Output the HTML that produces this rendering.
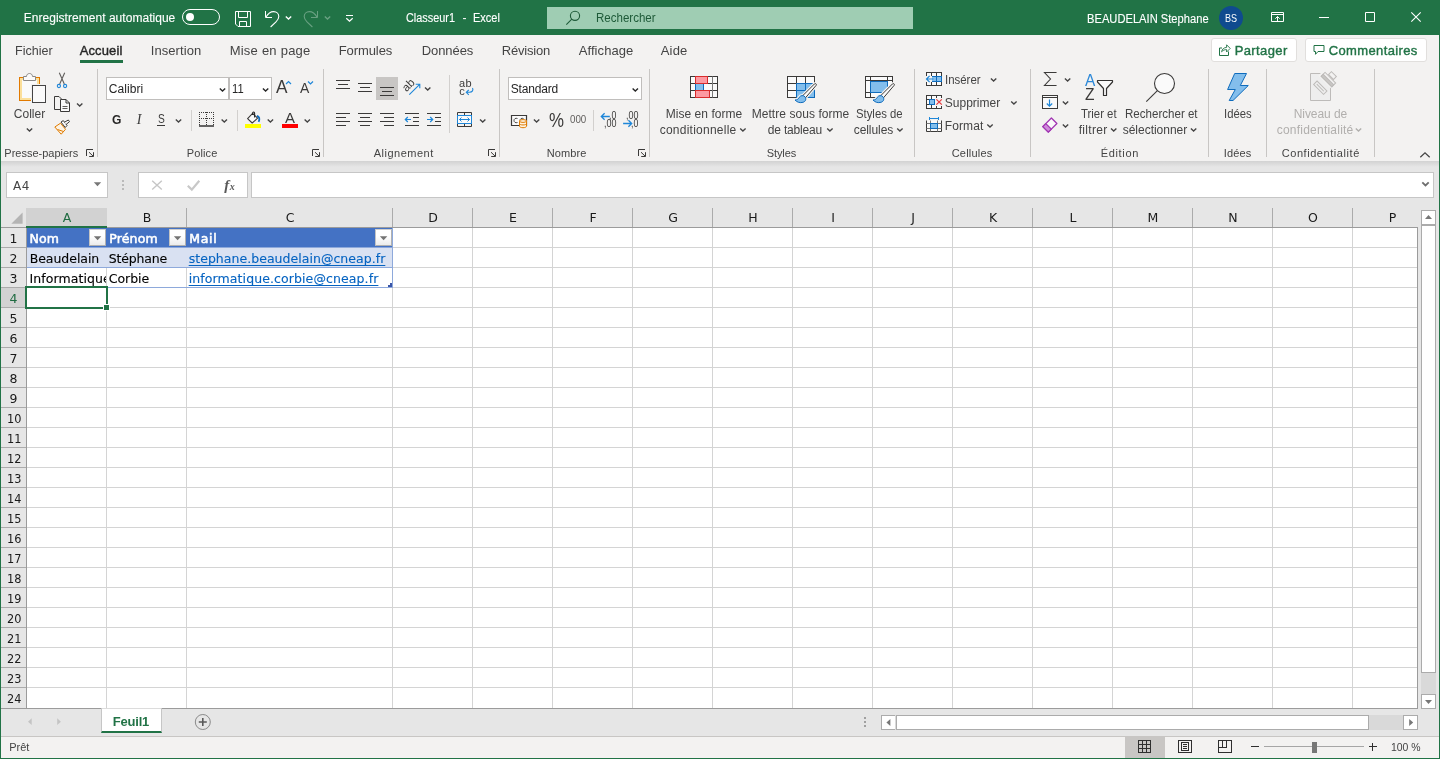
<!DOCTYPE html>
<html lang="fr">
<head>
<meta charset="utf-8">
<title>Classeur1 - Excel</title>
<style>
*{box-sizing:border-box;margin:0;padding:0}
html,body{width:1440px;height:759px;overflow:hidden;background:#e6e6e6;font-family:"Liberation Sans",sans-serif;font-size:12px}
#app{position:relative;width:1440px;height:759px;overflow:hidden;background:#e6e6e6}
#app div,#app span,#app svg{position:absolute}
.t{white-space:nowrap;line-height:1.2}
#tl{left:0;top:0;width:1440px;height:759px;will-change:transform}
.titlebar{left:0;top:0;width:1440px;height:35px;background:#217346}
.search{left:547px;top:7px;width:366px;height:22px;background:#9fcdb3}
.toggle{left:182px;top:9px;width:38px;height:16px;border:1px solid #fff;border-radius:8px}
.toggle i{position:absolute;left:3px;top:3px;width:8px;height:8px;border-radius:50%;background:#fff}
.avatar{left:1219px;top:6px;width:24px;height:24px;border-radius:50%;background:#0f4b8f}
.tabs{left:1px;top:35px;width:1438px;height:30px;background:#f3f2f1}
.ribbon{left:1px;top:65px;width:1438px;height:96px;background:#f3f2f1}
.shadow{left:1px;top:161px;width:1438px;height:6px;background:linear-gradient(#d2d2d2,#e6e6e6)}
.tabline{left:80px;top:60px;width:43px;height:3px;background:#217346}
.btn{background:#fff;border:1px solid #e1dfdd;border-radius:3px;height:24px;top:38px}
.sep{width:1px;background:#c8c6c4;top:69px;height:88px}
.sep2{width:1px;background:#d2d0ce}
.combo{background:#fff;border:1px solid #c0bebc;height:23px;top:77px}
.fbox{background:#fff;border:1px solid #c6c6c6;top:172px;height:26px}
.hdr{background:#e6e6e6}
.grid{left:27px;top:228px;width:1391px;height:480px;background:#fff}
.vl{width:1px;top:228px;height:480px;background:#d4d4d4}
.hl{height:1px;left:27px;width:1391px;background:#d4d4d4}
.chl{width:1px;top:208px;height:19px;background:#ababab}
.rhl{height:1px;left:0;width:26px;background:#ababab}
.flt{width:17px;height:17px;background:linear-gradient(#fff 40%,#ececec);border:1px solid #b1b1b1;border-top-color:#d0d0d0;border-left-color:#c4c4c4}
.sb{background:#fff;border:1px solid #ababab}
.status{left:1px;top:737px;width:1438px;height:21px;background:#f3f2f1}
.frame{left:0;top:0;width:1440px;height:759px;border:1px solid #217346;border-top:0;pointer-events:none}
</style>
</head>
<body>
<div id="app">

<!-- ============ TITLE BAR ============ -->
<div class="titlebar">
  <div class="toggle"><i></i></div>
  <div class="search"></div>
  <div class="avatar"></div>
</div>

<!-- ============ TABS ============ -->
<div class="tabs"></div>
<div class="tabline"></div>
<div class="btn" style="left:1211px;width:86px"></div>
<div class="btn" style="left:1305px;width:122px"></div>

<!-- ============ RIBBON ============ -->
<div class="ribbon"></div>
<div class="shadow"></div>
<div class="sep" style="left:97px"></div>
<div class="sep" style="left:323px"></div>
<div class="sep" style="left:499px"></div>
<div class="sep" style="left:649px"></div>
<div class="sep" style="left:914px"></div>
<div class="sep" style="left:1030px"></div>
<div class="sep" style="left:1208px"></div>
<div class="sep" style="left:1266px"></div>
<div class="sep" style="left:1374px"></div>
<div class="sep2" style="left:191px;top:110px;height:21px"></div>
<div class="sep2" style="left:237px;top:110px;height:21px"></div>
<div class="sep2" style="left:449px;top:75px;height:58px"></div>
<div class="sep2" style="left:593px;top:110px;height:21px"></div>
<div class="combo" style="left:106px;width:123px"></div>
<div class="combo" style="left:229px;width:43px"></div>
<div class="combo" style="left:508px;width:134px"></div>
<div style="left:376px;top:77px;width:22px;height:23px;background:#c8c6c4"></div>

<!-- ============ FORMULA BAR ============ -->
<div class="fbox" style="left:6px;width:102px"></div>
<div class="fbox" style="left:138px;width:110px"></div>
<div class="fbox" style="left:251px;width:1183px"></div>

<!-- ============ SHEET ============ -->
<div class="hdr" style="left:1px;top:208px;width:1417px;height:20px"></div>
<div style="left:1px;top:288px;width:25px;height:19px;background:#d2d2d2"></div>
<div class="grid"></div>
<div class="vl" style="left:106px"></div>
<div class="chl" style="left:106px"></div>
<div class="vl" style="left:186px"></div>
<div class="chl" style="left:186px"></div>
<div class="vl" style="left:392px"></div>
<div class="chl" style="left:392px"></div>
<div class="vl" style="left:472px"></div>
<div class="chl" style="left:472px"></div>
<div class="vl" style="left:552px"></div>
<div class="chl" style="left:552px"></div>
<div class="vl" style="left:632px"></div>
<div class="chl" style="left:632px"></div>
<div class="vl" style="left:712px"></div>
<div class="chl" style="left:712px"></div>
<div class="vl" style="left:792px"></div>
<div class="chl" style="left:792px"></div>
<div class="vl" style="left:872px"></div>
<div class="chl" style="left:872px"></div>
<div class="vl" style="left:952px"></div>
<div class="chl" style="left:952px"></div>
<div class="vl" style="left:1032px"></div>
<div class="chl" style="left:1032px"></div>
<div class="vl" style="left:1112px"></div>
<div class="chl" style="left:1112px"></div>
<div class="vl" style="left:1192px"></div>
<div class="chl" style="left:1192px"></div>
<div class="vl" style="left:1272px"></div>
<div class="chl" style="left:1272px"></div>
<div class="vl" style="left:1352px"></div>
<div class="chl" style="left:1352px"></div>
<div class="hl" style="top:247px"></div>
<div class="rhl" style="top:247px"></div>
<div class="hl" style="top:267px"></div>
<div class="rhl" style="top:267px"></div>
<div class="hl" style="top:287px"></div>
<div class="rhl" style="top:287px"></div>
<div class="hl" style="top:307px"></div>
<div class="rhl" style="top:307px"></div>
<div class="hl" style="top:327px"></div>
<div class="rhl" style="top:327px"></div>
<div class="hl" style="top:347px"></div>
<div class="rhl" style="top:347px"></div>
<div class="hl" style="top:367px"></div>
<div class="rhl" style="top:367px"></div>
<div class="hl" style="top:387px"></div>
<div class="rhl" style="top:387px"></div>
<div class="hl" style="top:407px"></div>
<div class="rhl" style="top:407px"></div>
<div class="hl" style="top:427px"></div>
<div class="rhl" style="top:427px"></div>
<div class="hl" style="top:447px"></div>
<div class="rhl" style="top:447px"></div>
<div class="hl" style="top:467px"></div>
<div class="rhl" style="top:467px"></div>
<div class="hl" style="top:487px"></div>
<div class="rhl" style="top:487px"></div>
<div class="hl" style="top:507px"></div>
<div class="rhl" style="top:507px"></div>
<div class="hl" style="top:527px"></div>
<div class="rhl" style="top:527px"></div>
<div class="hl" style="top:547px"></div>
<div class="rhl" style="top:547px"></div>
<div class="hl" style="top:567px"></div>
<div class="rhl" style="top:567px"></div>
<div class="hl" style="top:587px"></div>
<div class="rhl" style="top:587px"></div>
<div class="hl" style="top:607px"></div>
<div class="rhl" style="top:607px"></div>
<div class="hl" style="top:627px"></div>
<div class="rhl" style="top:627px"></div>
<div class="hl" style="top:647px"></div>
<div class="rhl" style="top:647px"></div>
<div class="hl" style="top:667px"></div>
<div class="rhl" style="top:667px"></div>
<div class="hl" style="top:687px"></div>
<div class="rhl" style="top:687px"></div>
<!-- grid frame -->
<div style="left:0;top:227px;width:1418px;height:1px;background:#9b9b9b"></div>
<div style="left:26px;top:209px;width:1px;height:499px;background:#9b9b9b"></div>
<div style="left:1417px;top:227px;width:1px;height:482px;background:#9b9b9b"></div>
<div style="left:0;top:708px;width:1418px;height:1px;background:#9b9b9b"></div>
<div style="left:26px;top:208px;width:81px;height:20px;background:#d2d2d2;border-bottom:2px solid #217346"></div>
<!-- table -->
<div style="left:27px;top:228px;width:366px;height:20px;background:#4472c4;border-right:1px solid #8ea9db;border-bottom:1px solid #8ea9db"></div>
<div style="left:27px;top:248px;width:366px;height:20px;background:#d9e1f2;border-right:1px solid #8ea9db;border-bottom:1px solid #8ea9db"></div>
<div style="left:27px;top:268px;width:366px;height:20px;border-right:1px solid #8ea9db;border-bottom:1px solid #8ea9db"></div>
<div class="flt" style="left:89px;top:229px"></div>
<div class="flt" style="left:169px;top:229px"></div>
<div class="flt" style="left:375px;top:229px"></div>
<!-- selection -->
<div style="left:25px;top:286px;width:83px;height:23px;border:2px solid #217346"></div>
<div style="left:103px;top:304px;width:7px;height:7px;background:#217346;border:1px solid #fff"></div>
<!-- vertical scrollbar -->
<div class="sb" style="left:1421px;top:210px;width:15px;height:15px"></div>
<div style="left:1421px;top:225px;width:15px;height:469px;background:#d9d9d9"></div>
<div class="sb" style="left:1421px;top:225px;width:15px;height:448px"></div>
<div class="sb" style="left:1421px;top:694px;width:15px;height:15px"></div>
<!-- horizontal scrollbar -->
<div class="sb" style="left:881px;top:715px;width:15px;height:15px"></div>
<div style="left:895px;top:715px;width:509px;height:15px;background:#d9d9d9"></div>
<div class="sb" style="left:896px;top:715px;width:473px;height:15px"></div>
<div class="sb" style="left:1403px;top:715px;width:15px;height:15px"></div>

<!-- sheet tab -->
<div style="left:101px;top:708px;width:61px;height:25px;background:#fff;border-left:1px solid #c6c6c6;border-right:1px solid #c6c6c6;border-bottom:2px solid #217346"></div>
<div style="left:102px;top:708px;width:59px;height:1px;background:#dcdcdc"></div>
<div style="left:1px;top:736px;width:1438px;height:1px;background:#c8c6c4"></div>

<!-- ============ STATUS BAR ============ -->
<div class="status"></div>
<div style="left:1125px;top:737px;width:40px;height:21px;background:#c8c6c4"></div>

<svg class="icons" style="left:0;top:0" width="1440" height="759" viewBox="0 0 1440 759" fill="none" stroke-linecap="butt">
<!-- title bar: quick access -->
<g stroke="#fff" stroke-width="1">
  <path d="M235.5,11.5 H250.5 V26.5 H238 L235.5,24 Z"/>
  <path d="M238.5,11.5 V17.5 H247.5 V11.5"/>
  <path d="M239.5,26.5 V21.5 H246.5 V26.5"/>
  <path d="M265.5,11 V17.5 H272"/>
  <path d="M266,17 C268,13.5 270.8,11.6 273.6,11.6 C276.8,11.6 278.8,13.8 278.8,16.6 C278.8,18.8 277.6,20.4 276,21.8 L270.6,27" stroke-width="1.1"/>
  <path d="M0.3,0.4 L3,3 L5.7,0.4" stroke-width="1.35" fill="none" transform="translate(285.5,16)"/>
  <g opacity="0.32">
    <path d="M317.5,11 V17.5 H311"/>
    <path d="M317,17 C315,13.5 312.2,11.6 309.4,11.6 C306.2,11.6 304.2,13.8 304.2,16.6 C304.2,18.8 305.4,20.4 307,21.8 L312.4,27" stroke-width="1.1"/>
    <path d="M0.3,0.4 L3,3 L5.7,0.4" stroke-width="1.35" fill="none" transform="translate(324.5,16)"/>
  </g>
  <path d="M346,15.5 H353"/>
  <path d="M346.3,18.3 L349.5,21.3 L352.7,18.3" stroke-width="1.2"/>
</g>
<!-- search icon -->
<g stroke="#1e5a38" stroke-width="1.1">
  <circle cx="575" cy="15.8" r="4.6"/>
  <path d="M571.8,19.2 L566.3,24.7"/>
</g>
<!-- window buttons -->
<g stroke="#fff" stroke-width="1">
  <path d="M1271.5,12.5 H1283.5 V21.5 H1271.5 Z M1271.5,14.5 H1283.5"/>
  <path d="M1277.5,21 V16.5 M1275.3,18.7 L1277.5,16.5 L1279.7,18.7"/>
  <path d="M1319,17.5 H1329"/>
  <path d="M1365.5,12.5 H1374.5 V21.5 H1365.5 Z"/>
  <path d="M1411.3,12.3 L1420.7,21.7 M1420.7,12.3 L1411.3,21.7" stroke-width="1.1"/>
</g>
<!-- share / comments -->
<g stroke="#217346" stroke-width="1">
  <path d="M1222,48 H1219.5 V55.5 H1228.5 V51.5"/>
  <path d="M1221.6,51.8 C1222,49.2 1223.8,47.6 1226.6,47.4 V44.8 L1230.2,48.4 L1226.6,52 V49.6 C1224.6,49.6 1223,50.2 1221.6,51.8 Z" stroke-linejoin="round" stroke-width="0.9"/>
  <path d="M1314,45.5 H1324 V51.5 H1318 L1315.5,54.3 V51.5 H1314 Z"/>
</g>
<!-- collapse ribbon chevron -->
<path d="M1420.3,157.3 L1425,152.8 L1429.7,157.3" stroke="#444" stroke-width="1.2"/>

<!-- ===== Presse-papiers ===== -->
<g>
  <rect x="19.5" y="77.5" width="20" height="23" fill="#fbdf9a" stroke="#e27a00"/>
  <rect x="22" y="80" width="15" height="18" fill="#fafafa"/>
  <path d="M23.5,80.5 V76.5 H26.5 C26.5,74.5 28,73.5 29.5,73.5 C31,73.5 32.5,74.5 32.5,76.5 H35.5 V80.5 Z" fill="#fafafa" stroke="#8a8886"/>
  <rect x="31" y="84" width="16" height="20" fill="#f3f2f1"/>
  <rect x="32.5" y="85.5" width="13" height="17" fill="#fafafa" stroke="#444"/>
  <path d="M0.3,0.4 L3,3 L5.7,0.4" stroke-width="1.35" fill="none" transform="translate(26.5,128)" stroke="#444"/>
  <!-- scissors -->
  <path d="M59.3,72.8 L64.3,84 M64.7,72.8 L59.7,84" stroke="#605e5c" stroke-width="1.1"/>
  <circle cx="58.9" cy="86" r="1.6" stroke="#1e86d8" stroke-width="1.1"/>
  <circle cx="65.1" cy="86" r="1.6" stroke="#1e86d8" stroke-width="1.1"/>
  <!-- copy -->
  <path d="M60.5,109.5 H54.5 V96.5 H59 L61.5,99" stroke="#3b3a39"/>
  <path d="M60.5,99.5 H66 L69.5,103 V111.5 H60.5 Z" stroke="#3b3a39" fill="#fafafa"/>
  <path d="M66,99.5 V103 H69.5" stroke="#3b3a39"/>
  <path d="M62.5,106.5 H67.5 M62.5,108.5 H67.5" stroke="#605e5c"/>
  <path d="M0.3,0.4 L3,3 L5.7,0.4" stroke-width="1.35" fill="none" transform="translate(76.7,103)" stroke="#444"/>
  <!-- format painter -->
  <path d="M54.8,127 L60.5,123.2 L65.5,129.3 L61.2,134.2 Z" fill="#fdf3e3" stroke="#e07b00" stroke-linejoin="round"/>
  <path d="M57.5,129.5 L63.5,131.5" stroke="#e07b00"/>
  <path d="M61,122 L63.3,120.6 L67,125.5 L65.2,127.5 Z" fill="#fafafa" stroke="#3b3a39" stroke-linejoin="round"/>
  <path d="M64.3,122.3 L68.3,120 L69.5,121.6 L66,124.6" stroke="#3b3a39" fill="#fafafa"/>
  <path d="M0.5,7 V0.5 H7 M3,3.2 L7.2,7.2 M7.5,3.2 V7.5 H3.2" stroke="#3b3a39" stroke-width="1" fill="none" transform="translate(86,149)"/>
</g>


<!-- ===== Police ===== -->
<g stroke="#262626">
  <path d="M0.3,0.4 L3,3 L5.7,0.4" stroke-width="1.35" fill="none" transform="translate(219.5,88)"/>
  <path d="M0.3,0.4 L3,3 L5.7,0.4" stroke-width="1.35" fill="none" transform="translate(262.6,88)"/>
  <path d="M0.3,0.4 L3,3 L5.7,0.4" stroke-width="1.35" fill="none" transform="translate(632.3,88)"/>
</g>
<g stroke="#444">
  <path d="M0.3,0.4 L3,3 L5.7,0.4" stroke-width="1.35" fill="none" transform="translate(175.5,119)"/>
  <path d="M0.3,0.4 L3,3 L5.7,0.4" stroke-width="1.35" fill="none" transform="translate(221.3,119)"/>
  <path d="M0.3,0.4 L3,3 L5.7,0.4" stroke-width="1.35" fill="none" transform="translate(267.4,119)"/>
  <path d="M0.3,0.4 L3,3 L5.7,0.4" stroke-width="1.35" fill="none" transform="translate(304.3,119)"/>
  <path d="M0.3,0.4 L3,3 L5.7,0.4" stroke-width="1.35" fill="none" transform="translate(424.7,87)"/>
  <path d="M0.3,0.4 L3,3 L5.7,0.4" stroke-width="1.35" fill="none" transform="translate(479.7,119)"/>
  <path d="M0.3,0.4 L3,3 L5.7,0.4" stroke-width="1.35" fill="none" transform="translate(533.6,119)"/>
  <path d="M0.3,0.4 L3,3 L5.7,0.4" stroke-width="1.35" fill="none" transform="translate(739.9,128)"/>
  <path d="M0.3,0.4 L3,3 L5.7,0.4" stroke-width="1.35" fill="none" transform="translate(826.9,128)"/>
  <path d="M0.3,0.4 L3,3 L5.7,0.4" stroke-width="1.35" fill="none" transform="translate(896.9,128)"/>
  <path d="M0.3,0.4 L3,3 L5.7,0.4" stroke-width="1.35" fill="none" transform="translate(990.6,78)"/>
  <path d="M0.3,0.4 L3,3 L5.7,0.4" stroke-width="1.35" fill="none" transform="translate(1010.9,101)"/>
  <path d="M0.3,0.4 L3,3 L5.7,0.4" stroke-width="1.35" fill="none" transform="translate(987,124)"/>
  <path d="M0.3,0.4 L3,3 L5.7,0.4" stroke-width="1.35" fill="none" transform="translate(1064.6,78)"/>
  <path d="M0.3,0.4 L3,3 L5.7,0.4" stroke-width="1.35" fill="none" transform="translate(1062.5,101)"/>
  <path d="M0.3,0.4 L3,3 L5.7,0.4" stroke-width="1.35" fill="none" transform="translate(1062.5,124)"/>
  <path d="M0.3,0.4 L3,3 L5.7,0.4" stroke-width="1.35" fill="none" transform="translate(1110.7,128)"/>
  <path d="M0.3,0.4 L3,3 L5.7,0.4" stroke-width="1.35" fill="none" transform="translate(1190.6,128)"/>
</g>
<path d="M0.3,0.4 L3,3 L5.7,0.4" stroke-width="1.35" fill="none" transform="translate(1355.5,128)" stroke="#b1afad"/>
<path d="M0.5,7 V0.5 H7 M3,3.2 L7.2,7.2 M7.5,3.2 V7.5 H3.2" stroke="#3b3a39" stroke-width="1" fill="none" transform="translate(312,149)"/>
<path d="M0.5,7 V0.5 H7 M3,3.2 L7.2,7.2 M7.5,3.2 V7.5 H3.2" stroke="#3b3a39" stroke-width="1" fill="none" transform="translate(488,149)"/>
<path d="M0.5,7 V0.5 H7 M3,3.2 L7.2,7.2 M7.5,3.2 V7.5 H3.2" stroke="#3b3a39" stroke-width="1" fill="none" transform="translate(638,149)"/>
<!-- grow/shrink font carets -->
<path d="M286,84 L288.5,81.5 L291,84" stroke="#1e86d8" stroke-width="1.2"/>
<path d="M308,81.5 L310.5,84 L313,81.5" stroke="#1e86d8" stroke-width="1.2"/>
<!-- borders -->
<g stroke="#3b3a39" shape-rendering="crispEdges">
  <path d="M199,112.5 H214 M199,118.5 H214 M199.5,112 V125 M206.5,112 V125 M213.5,112 V125" stroke-dasharray="1 1"/>
  <path d="M199,126 H214" stroke-width="1.4" stroke="#262626" shape-rendering="auto"/>
  <path d="M157,125.5 H165" stroke="#3b3a39"/>
</g>
<!-- fill bucket -->
<rect x="245" y="124" width="16" height="4" fill="#ffff00"/>
<path d="M247.6,118.7 L252.6,113.4 L257.6,118.2 L252.2,123 Z" stroke="#3b3a39" fill="#fafafa" stroke-linejoin="round" stroke-width="1.1"/>
<path d="M252.6,115 V113.2 C252.6,111.6 254.6,111.6 254.6,113.2 V117.4" stroke="#262626" stroke-width="1.1"/>
<path d="M256.9,115.9 C259.4,116.6 260,119 258.6,121.8" stroke="#0f6cbd" stroke-width="1.8"/>
<!-- font colour -->
<rect x="282" y="124" width="16" height="4" fill="#ff0000"/>

<!-- ===== Alignement ===== -->
<g stroke="#3b3a39" shape-rendering="crispEdges">
  <path d="M336,80.5 H350 M338,84.5 H348 M336,88.5 H350"/>
  <path d="M358,83.5 H372 M360,87.5 H370 M358,91.5 H372"/>
  <path d="M380,87.5 H394 M382,91.5 H392 M380,95.5 H394"/>
  <path d="M336,113.5 H350 M336,117.5 H346 M336,121.5 H350 M336,125.5 H346"/>
  <path d="M358,113.5 H372 M360,117.5 H370 M358,121.5 H372 M360,125.5 H370"/>
  <path d="M380,113.5 H394 M384,117.5 H394 M380,121.5 H394 M384,125.5 H394"/>
  <path d="M405,113.5 H419 M413,117.5 H419 M413,121.5 H419 M405,125.5 H419"/>
  <path d="M427,113.5 H441 M435,117.5 H441 M435,121.5 H441 M427,125.5 H441"/>
</g>
<g stroke="#1e86d8" stroke-width="1.2">
  <path d="M405.3,119.5 H411 M407.8,117 L405.3,119.5 L407.8,122"/>
  <path d="M427,119.5 H432.7 M430.2,117 L432.7,119.5 L430.2,122"/>
  <path d="M409.3,94.7 L419.7,84.3 M415.7,84.2 H419.8 V88.3" stroke-width="1.1"/>
  <path d="M472.5,88 C473.5,90 472.5,92.3 469.5,92.3 H466.3 M468.8,89.8 L466.3,92.3 L468.8,94.8" stroke-width="1.1"/>
</g>
<!-- merge -->
<g>
  <path d="M457.5,112.5 H471.5 V126.5 H457.5 Z M464.5,112.5 V115.5 M464.5,123.5 V126.5" stroke="#3b3a39"/>
  <rect x="457.5" y="115.5" width="14" height="8" fill="#fafafa" stroke="#1e86d8"/>
  <path d="M459.5,119.5 H469.5 M461.5,117.5 L459.5,119.5 L461.5,121.5 M467.5,117.5 L469.5,119.5 L467.5,121.5" stroke="#1e86d8"/>
</g>
<!-- ===== Nombre ===== -->
<g>
  <path d="M511.5,115.5 H526.5 V125.5 H511.5 Z" stroke="#3b3a39" fill="#fafafa" stroke-width="1.2"/>
  <path d="M517.5,118.5 C515.5,117.8 514,118.8 514,120.5 C514,122.2 515.5,123.2 517.5,122.5 M523.5,118.5 C521.5,117.8 520,118.8 520,120.5" stroke="#3b3a39" stroke-width="0.9"/>
  <path d="M519.5,121 V126.2 C519.5,128.2 526.5,128.2 526.5,126.2 V121 Z" fill="#fdf3e3" stroke="#e07b00"/>
  <ellipse cx="523" cy="121" rx="3.5" ry="1.4" fill="#fdf3e3" stroke="#e07b00"/>
  <path d="M519.5,123.6 C519.5,125.4 526.5,125.4 526.5,123.6" stroke="#e07b00"/>
</g>
<g stroke="#1e86d8" stroke-width="1.2">
  <path d="M601.4,116.5 H609.8 M604.6,113.2 L601.3,116.5 L604.6,119.8" stroke-width="1.3"/>
  <path d="M623.1,123.5 H631.6 M628.4,120.2 L631.7,123.5 L628.4,126.8" stroke-width="1.3"/>
</g>
<!-- ===== Styles ===== -->
<g>
  <rect x="690.5" y="76.5" width="27" height="21" fill="#fafafa" stroke="#3b3a39"/>
  <path d="M690.5,83.5 H717.5 M690.5,90.5 H717.5 M695.5,76.5 V97.5" stroke="#3b3a39"/>
  <path d="M712.5,76.5 V97.5" stroke="#7a7a7a"/>
  <rect x="695.5" y="76.5" width="12" height="7" fill="#fc9aa2" stroke="#d92c2c"/>
  <rect x="695.5" y="90.5" width="14" height="7" fill="#fc9aa2" stroke="#d92c2c"/>
  <rect x="696" y="84" width="8" height="6" fill="#83beec"/>
  <path d="M695.5,84 V90 M703.5,84 V90" stroke="#0f6cbd"/>
</g>
<g>
  <rect x="787.5" y="76.5" width="27" height="21" fill="#fafafa" stroke="#3b3a39"/>
  <rect x="796.5" y="83.5" width="18" height="14" fill="#83beec"/>
  <path d="M787.5,83.5 H796.5 M787.5,90.5 H796.5 M796.5,76.5 V83.5 M805.5,76.5 V83.5" stroke="#3b3a39"/>
  <path d="M796.5,83.5 H814.5 M796.5,90.5 H814.5 M796.5,83.5 V97.5 M805.5,83.5 V97.5 M814.5,83.5 V97.5 M796.5,97.5 H814.5" stroke="#0f6cbd"/>
  <path d="M802.8,95.6 L814.5,83.9 C815.6,83 817,84.3 816.1,85.4 L805.3,98 Z M795,100 C797.5,100 798.5,98.8 799.3,97.3 C800.5,95.3 803.5,95 805,96.8 C806.5,98.8 805.8,101.5 803,102.3 C800,103.2 796.8,102.2 795,100 Z" fill="#f3f2f1" stroke="#f3f2f1" stroke-width="3.2" stroke-linejoin="round"/>
  <path d="M802.8,95.6 L814.5,83.9 C815.6,83 817,84.3 816.1,85.4 L805.3,98 Z" fill="#fafafa" stroke="#3b3a39" stroke-linejoin="round"/>
  <path d="M795,100 C797.5,100 798.5,98.8 799.3,97.3 C800.5,95.3 803.5,95 805,96.8 C806.5,98.8 805.8,101.5 803,102.3 C800,103.2 796.8,102.2 795,100 Z" fill="#83beec" stroke="#0f6cbd" stroke-linejoin="round"/>
</g>
<g>
  <rect x="865.5" y="76.5" width="27" height="21" fill="#fafafa" stroke="#3b3a39"/>
  <path d="M865.5,80.5 H892.5 M865.5,92.5 H892.5 M870.5,76.5 V97.5 M887.5,76.5 V97.5" stroke="#3b3a39"/>
  <rect x="870.5" y="81.5" width="17" height="11" fill="#83beec" stroke="#0f6cbd"/>
  <path d="M895,84 V99 H882 Z" fill="#f3f2f1" stroke="#f3f2f1" stroke-width="2"/>
  <path d="M880.8,95.6 L892.5,83.9 C893.6,83 895,84.3 894.1,85.4 L883.3,98 Z M873,100 C875.5,100 876.5,98.8 877.3,97.3 C878.5,95.3 881.5,95 883,96.8 C884.5,98.8 883.8,101.5 881,102.3 C878,103.2 874.8,102.2 873,100 Z" fill="#f3f2f1" stroke="#f3f2f1" stroke-width="3.2" stroke-linejoin="round"/>
  <path d="M880.8,95.6 L892.5,83.9 C893.6,83 895,84.3 894.1,85.4 L883.3,98 Z" fill="#fafafa" stroke="#3b3a39" stroke-linejoin="round"/>
  <path d="M873,100 C875.5,100 876.5,98.8 877.3,97.3 C878.5,95.3 881.5,95 883,96.8 C884.5,98.8 883.8,101.5 881,102.3 C878,103.2 874.8,102.2 873,100 Z" fill="#83beec" stroke="#0f6cbd" stroke-linejoin="round"/>
</g>
<!-- ===== Cellules ===== -->
<g>
  <rect x="926.5" y="72.5" width="15" height="13" fill="#fafafa" stroke="#3b3a39"/>
  <path d="M926.5,76.5 H941.5 M926.5,81.5 H941.5 M931.5,72.5 V85.5 M936.5,72.5 V85.5" stroke="#3b3a39"/>
  <rect x="932" y="76" width="10" height="6" fill="#83beec" stroke="none"/>
  <path d="M932,76.5 H942 M932,81.5 H942 M936.5,76 V82 M941.5,76 V82" stroke="#0f6cbd"/>
  <rect x="925" y="76" width="7" height="6" fill="#f3f2f1"/>
  <path d="M926.6,79 H933.5 M929.6,75.9 L926.5,79 L929.6,82.1" stroke="#1e86d8" stroke-width="1.2"/>
</g>
<g>
  <rect x="926.5" y="95.5" width="15" height="13" fill="#fafafa" stroke="#3b3a39"/>
  <path d="M926.5,99.5 H941.5 M926.5,104.5 H941.5 M931.5,95.5 V108.5 M936.5,95.5 V108.5" stroke="#3b3a39"/>
  <rect x="935" y="98" width="8" height="8" fill="#f3f2f1"/>
  <rect x="929.5" y="99.5" width="5" height="5" fill="#83beec" stroke="#0f6cbd"/>
  <path d="M936.4,99.3 L941.8,104.7 M941.8,99.3 L936.4,104.7" stroke="#e8383d" stroke-width="1.2"/>
</g>
<g>
  <path d="M926.5,120.5 V131.5 H941.5 V120.5" fill="#fafafa" stroke="#3b3a39"/>
  <path d="M926.5,123.5 H941.5 M926.5,128.5 H941.5 M930.5,120.5 V131.5 M937.5,120.5 V131.5" stroke="#7a7a7a"/>
  <rect x="930.5" y="123.5" width="7" height="5" fill="#83beec" stroke="#0f6cbd"/>
  <path d="M929.5,118.5 H938.5 M929.5,117 V120 M938.5,117 V120" stroke="#1e86d8"/>
</g>
<!-- ===== Edition ===== -->
<path d="M1056,73 V72.5 H1044.5 L1050.5,79 L1044.5,85.5 H1056 V85" stroke="#3b3a39" stroke-width="1.1"/>
<g>
  <rect x="1042.5" y="95.5" width="15" height="13" fill="#fafafa" stroke="#3b3a39"/>
  <path d="M1042.5,97.5 H1057.5" stroke="#3b3a39"/>
  <path d="M1049.5,99.5 V106 M1046.8,103.5 L1049.5,106.2 L1052.2,103.5" stroke="#1e86d8" stroke-width="1.2"/>
</g>
<g>
  <path d="M1042.8,126.6 L1051.4,118 L1056.9,123.5 L1048.3,132.1 Z" fill="#fafafa" stroke="#a135b3" stroke-linejoin="round" stroke-width="1.3"/>
  <path d="M1042.8,126.6 L1045.8,123.6 L1051.3,129.1 L1048.3,132.1 Z" fill="#cf8bdb" stroke="#a135b3" stroke-linejoin="round" stroke-width="1.3"/>
</g>
<path d="M1097.5,80.5 H1112.5 V82 L1106.5,88.5 V95.5 H1103.5 V88.5 L1097.5,82 Z" fill="#fafafa" stroke="#323130" stroke-linejoin="round" stroke-width="1.2"/>
<circle cx="1164.5" cy="83.5" r="10" fill="#fafafa" stroke="#3b3a39" stroke-width="1.1"/>
<path d="M1157.4,90.6 L1146.3,101.7" stroke="#3b3a39" stroke-width="1.1"/>
<!-- ===== Idees ===== -->
<path d="M1234.7,73.5 H1246.5 L1240.3,85.5 H1248.3 L1233,100.5 H1229.2 L1235.3,89.5 H1227.6 Z" fill="#83beec" stroke="#0f6cbd" stroke-linejoin="miter"/>
<!-- ===== Confidentialite (disabled) ===== -->
<g stroke="#bdbbb9" fill="#eeeeee">
  <path d="M1310.5,73.5 H1330.5 V100.5 H1310.5 Z"/>
  <g transform="translate(1320.3,87.7) rotate(45)">
    <rect x="-10" y="-21" width="20" height="14" fill="#f3f2f1" stroke="none"/>
    <rect x="-7" y="-2.4" width="14" height="4.8"/>
    <path d="M-5,0 H5"/>
    <rect x="-7.5" y="-14.2" width="15" height="5.4" fill="#f3f2f1"/>
    <rect x="-7.5" y="-11.5" width="15" height="2.7" fill="#c8c6c4"/>
    <rect x="-3.5" y="-19.2" width="7" height="4" fill="#f3f2f1"/>
  </g>
</g>


<!-- ===== formula bar ===== -->
<path d="M93.8,182.3 H101.2 L97.5,186.2 Z" fill="#777" stroke="none"/>
<g fill="#bababa" stroke="none"><rect x="122" y="180" width="2" height="2"/><rect x="122" y="184" width="2" height="2"/><rect x="122" y="188" width="2" height="2"/></g>
<path d="M152.2,180.7 L161.8,189.5 M161.8,180.7 L152.2,189.5" stroke="#c6c6c6" stroke-width="1.4"/>
<path d="M187.8,185.8 L191.8,189.6 L199.3,180.8" stroke="#c8c8c8" stroke-width="2.2"/>
<path d="M1422.3,182.3 L1425.5,185.5 L1428.7,182.3" stroke="#6e6e6e" stroke-width="1.8"/>
<!-- select all -->
<path d="M22.6,212.5 V223.8 H11.3 Z" fill="#b4b4b4" stroke="none"/>
<!-- filter arrows -->
<g fill="#737373" stroke="none">
  <path d="M93.9,236.3 H101.3 L97.6,240.2 Z"/>
  <path d="M173.9,236.3 H181.3 L177.6,240.2 Z"/>
  <path d="M379.9,236.3 H387.3 L383.6,240.2 Z"/>
</g>
<!-- table resize handle -->
<path d="M391,283 V286 H388" stroke="#3a55a8" stroke-width="2"/>
<!-- scrollbar arrows -->
<g fill="#777" stroke="none">
  <path d="M1425,219 L1428.5,215 L1432,219 Z"/>
  <path d="M1425,700 L1428.5,704 L1432,700 Z"/>
  <path d="M890.4,719 V726 L886.4,722.5 Z"/>
  <path d="M1409.2,719 V726 L1413.2,722.5 Z"/>
</g>
<g fill="#a0a0a0" stroke="none"><rect x="864" y="717" width="2" height="2"/><rect x="864" y="721" width="2" height="2"/><rect x="864" y="725" width="2" height="2"/></g>
<!-- sheet nav -->
<g fill="#c4c4c4" stroke="none">
  <path d="M31.7,718.3 V725 L28,721.7 Z"/>
  <path d="M57.2,718.3 V725 L60.9,721.7 Z"/>
</g>
<circle cx="202.8" cy="722" r="7.5" stroke="#8a8a8a" fill="none"/>
<path d="M198.8,722 H206.8 M202.8,718 V726" stroke="#595959" stroke-width="1.6"/>
<!-- status bar icons -->
<g stroke="#2f2f2f" shape-rendering="crispEdges">
  <path d="M1138.5,740.5 H1150.5 V752.5 H1138.5 Z M1142.5,740.5 V752.5 M1146.5,740.5 V752.5 M1138.5,744.5 H1150.5 M1138.5,748.5 H1150.5" stroke-width="1"/>
  <path d="M1178.5,740.5 H1191.5 V752.5 H1178.5 Z M1181.5,742.5 H1188.5 V750.5 H1181.5 Z M1183,744.5 H1187 M1183,746.5 H1187 M1183,748.5 H1187"/>
  <path d="M1218.5,740.5 H1231.5 V752.5 H1218.5 Z M1218.5,747.5 H1226.5 V740.5 M1222.5,740.5 V747.5"/>
  <path d="M1251,746.5 H1259 M1369,746.5 H1377 M1372.500,743 V751"/>
</g>
<path d="M1264,746.5 H1364" stroke="#a6a6a6" shape-rendering="crispEdges"/>
<rect x="1312" y="742" width="5" height="11" fill="#777" stroke="none"/>
</svg>


<div id="tl">
<span class="t" style='left:23.70px;top:11.00px;font-size:12px;color:#fff;-webkit-text-stroke:0.12px currentColor;letter-spacing:0.034px;'>Enregistrement automatique</span>
<span class="t" style='left:406.10px;top:11.00px;font-size:12px;color:#fff;-webkit-text-stroke:0.12px currentColor;transform:scaleX(0.907);transform-origin:0 0;'>Classeur1</span>
<span class="t" style='left:462.50px;top:11.00px;font-size:12px;color:#fff;'>-</span>
<span class="t" style='left:473.20px;top:11.00px;font-size:12px;color:#fff;-webkit-text-stroke:0.12px currentColor;transform:scaleX(0.917);transform-origin:0 0;'>Excel</span>
<span class="t" style='left:595.70px;top:11.00px;font-size:12px;color:#1e5a38;transform:scaleX(0.961);transform-origin:0 0;'>Rechercher</span>
<span class="t" style='left:1086.70px;top:12.00px;font-size:12px;color:#fff;-webkit-text-stroke:0.12px currentColor;transform:scaleX(0.930);transform-origin:0 0;'>BEAUDELAIN Stephane</span>
<span class="t" style='left:1225.20px;top:12.00px;font-size:10.5px;color:#fff;transform:scaleX(0.863);transform-origin:0 0;'>BS</span>
<span class="t" style='left:14.70px;top:43.00px;font-size:13px;color:#444;transform:scaleX(0.964);transform-origin:0 0;'>Fichier</span>
<span class="t" style='left:79.70px;top:43.00px;font-size:13px;color:#262626;-webkit-text-stroke:0.4px currentColor;letter-spacing:0.113px;'>Accueil</span>
<span class="t" style='left:150.70px;top:43.00px;font-size:13px;color:#444;letter-spacing:0.091px;'>Insertion</span>
<span class="t" style='left:229.70px;top:43.00px;font-size:13px;color:#444;letter-spacing:0.231px;'>Mise en page</span>
<span class="t" style='left:338.70px;top:43.00px;font-size:13px;color:#444;letter-spacing:-0.084px;'>Formules</span>
<span class="t" style='left:421.70px;top:43.00px;font-size:13px;color:#444;letter-spacing:-0.074px;'>Données</span>
<span class="t" style='left:501.70px;top:43.00px;font-size:13px;color:#444;letter-spacing:-0.180px;'>Révision</span>
<span class="t" style='left:578.70px;top:43.00px;font-size:13px;color:#444;letter-spacing:0.079px;'>Affichage</span>
<span class="t" style='left:660.70px;top:43.00px;font-size:13px;color:#444;letter-spacing:0.190px;'>Aide</span>
<span class="t" style='left:1234.70px;top:43.00px;font-size:13px;color:#217346;-webkit-text-stroke:0.4px currentColor;letter-spacing:0.389px;'>Partager</span>
<span class="t" style='left:1328.70px;top:43.00px;font-size:13px;color:#217346;-webkit-text-stroke:0.4px currentColor;letter-spacing:0.370px;'>Commentaires</span>
<span class="t" style='left:13.70px;top:107.00px;font-size:12px;color:#444;letter-spacing:0.051px;'>Coller</span>
<span class="t" style='left:4.30px;top:147.00px;font-size:11px;color:#444;letter-spacing:0.001px;'>Presse-papiers</span>
<span class="t" style='left:108.70px;top:82.00px;font-size:12px;color:#262626;letter-spacing:0.097px;'>Calibri</span>
<span class="t" style='left:231.70px;top:82.00px;font-size:12px;color:#262626;transform:scaleX(0.930);transform-origin:0 0;'>11</span>
<span class="t" style='left:112.20px;top:111.50px;font-size:13px;color:#262626;font-weight:700;transform:scaleX(0.928);transform-origin:0 0;'>G</span>
<span class="t" style='left:136.66px;top:111.50px;font-size:14px;color:#3b3b3b;font-family:"Liberation Serif", serif;font-style:italic;'>I</span>
<span class="t" style='left:157.50px;top:112.30px;font-size:12.5px;color:#3b3b3b;transform:scaleX(0.815);transform-origin:0 0;'>S</span>
<span class="t" style='left:186.70px;top:147.00px;font-size:11px;color:#444;letter-spacing:0.126px;'>Police</span>
<span class="t" style='left:373.70px;top:147.00px;font-size:11px;color:#444;letter-spacing:0.506px;'>Alignement</span>
<span class="t" style='left:510.70px;top:82.00px;font-size:12px;color:#262626;letter-spacing:-0.158px;'>Standard</span>
<span class="t" style='left:546.70px;top:147.00px;font-size:11px;color:#444;letter-spacing:0.095px;'>Nombre</span>
<span class="t" style='left:665.70px;top:107.00px;font-size:12px;color:#444;letter-spacing:0.047px;'>Mise en forme</span>
<span class="t" style='left:659.70px;top:123.00px;font-size:12px;color:#444;letter-spacing:0.247px;'>conditionnelle</span>
<span class="t" style='left:751.70px;top:107.00px;font-size:12px;color:#444;letter-spacing:0.056px;'>Mettre sous forme</span>
<span class="t" style='left:767.70px;top:123.00px;font-size:12px;color:#444;letter-spacing:-0.162px;'>de tableau</span>
<span class="t" style='left:855.70px;top:107.00px;font-size:12px;color:#444;transform:scaleX(0.944);transform-origin:0 0;'>Styles de</span>
<span class="t" style='left:853.70px;top:123.00px;font-size:12px;color:#444;letter-spacing:-0.062px;'>cellules</span>
<span class="t" style='left:766.70px;top:147.00px;font-size:11px;color:#444;letter-spacing:-0.074px;'>Styles</span>
<span class="t" style='left:944.70px;top:73.00px;font-size:12px;color:#444;transform:scaleX(0.953);transform-origin:0 0;'>Insérer</span>
<span class="t" style='left:944.70px;top:96.00px;font-size:12px;color:#444;letter-spacing:0.030px;'>Supprimer</span>
<span class="t" style='left:944.70px;top:119.00px;font-size:12px;color:#444;letter-spacing:0.117px;'>Format</span>
<span class="t" style='left:951.70px;top:147.00px;font-size:11px;color:#444;letter-spacing:0.208px;'>Cellules</span>
<span class="t" style='left:1080.70px;top:107.00px;font-size:12px;color:#444;transform:scaleX(0.948);transform-origin:0 0;'>Trier et</span>
<span class="t" style='left:1078.70px;top:123.00px;font-size:12px;color:#444;letter-spacing:0.321px;'>filtrer</span>
<span class="t" style='left:1124.70px;top:107.00px;font-size:12px;color:#444;transform:scaleX(0.963);transform-origin:0 0;'>Rechercher et</span>
<span class="t" style='left:1122.70px;top:123.00px;font-size:12px;color:#444;letter-spacing:-0.011px;'>sélectionner</span>
<span class="t" style='left:1100.70px;top:147.00px;font-size:11px;color:#444;letter-spacing:0.660px;'>Édition</span>
<span class="t" style='left:1223.70px;top:107.00px;font-size:12px;color:#444;transform:scaleX(0.940);transform-origin:0 0;'>Idées</span>
<span class="t" style='left:1223.70px;top:147.00px;font-size:11px;color:#444;letter-spacing:0.170px;'>Idées</span>
<span class="t" style='left:1293.70px;top:107.00px;font-size:12px;color:#b1afad;letter-spacing:-0.056px;'>Niveau de</span>
<span class="t" style='left:1276.70px;top:123.00px;font-size:12px;color:#b1afad;letter-spacing:0.229px;'>confidentialité</span>
<span class="t" style='left:1281.70px;top:147.00px;font-size:11px;color:#444;letter-spacing:0.563px;'>Confidentialité</span>
<span class="t" style='left:12.90px;top:179.00px;font-size:12px;color:#444;font-family:"DejaVu Sans", "Liberation Sans", sans-serif;letter-spacing:0.756px;'>A4</span>
<span class="t" style='left:224.25px;top:176.00px;font-size:15px;color:#595959;font-weight:700;font-family:"Liberation Serif", serif;font-style:italic;'>f</span>
<span class="t" style='left:229.75px;top:181.00px;font-size:10px;color:#595959;font-weight:700;font-family:"Liberation Serif", serif;font-style:italic;'>x</span>
<span class="t" style='left:62.72px;top:210.00px;font-size:12.5px;color:#1f6b41;font-family:"DejaVu Sans", "Liberation Sans", sans-serif;'>A</span>
<span class="t" style='left:142.71px;top:210.00px;font-size:12.5px;color:#1a1a1a;font-family:"DejaVu Sans", "Liberation Sans", sans-serif;'>B</span>
<span class="t" style='left:285.63px;top:210.00px;font-size:12.5px;color:#1a1a1a;font-family:"DejaVu Sans", "Liberation Sans", sans-serif;'>C</span>
<span class="t" style='left:428.18px;top:210.00px;font-size:12.5px;color:#1a1a1a;font-family:"DejaVu Sans", "Liberation Sans", sans-serif;'>D</span>
<span class="t" style='left:509.05px;top:210.00px;font-size:12.5px;color:#1a1a1a;font-family:"DejaVu Sans", "Liberation Sans", sans-serif;'>E</span>
<span class="t" style='left:589.40px;top:210.00px;font-size:12.5px;color:#1a1a1a;font-family:"DejaVu Sans", "Liberation Sans", sans-serif;'>F</span>
<span class="t" style='left:668.16px;top:210.00px;font-size:12.5px;color:#1a1a1a;font-family:"DejaVu Sans", "Liberation Sans", sans-serif;'>G</span>
<span class="t" style='left:748.30px;top:210.00px;font-size:12.5px;color:#1a1a1a;font-family:"DejaVu Sans", "Liberation Sans", sans-serif;'>H</span>
<span class="t" style='left:831.16px;top:210.00px;font-size:12.5px;color:#1a1a1a;font-family:"DejaVu Sans", "Liberation Sans", sans-serif;'>I</span>
<span class="t" style='left:911.16px;top:210.00px;font-size:12.5px;color:#1a1a1a;font-family:"DejaVu Sans", "Liberation Sans", sans-serif;'>J</span>
<span class="t" style='left:988.90px;top:210.00px;font-size:12.5px;color:#1a1a1a;font-family:"DejaVu Sans", "Liberation Sans", sans-serif;'>K</span>
<span class="t" style='left:1069.52px;top:210.00px;font-size:12.5px;color:#1a1a1a;font-family:"DejaVu Sans", "Liberation Sans", sans-serif;'>L</span>
<span class="t" style='left:1147.60px;top:210.00px;font-size:12.5px;color:#1a1a1a;font-family:"DejaVu Sans", "Liberation Sans", sans-serif;'>M</span>
<span class="t" style='left:1228.32px;top:210.00px;font-size:12.5px;color:#1a1a1a;font-family:"DejaVu Sans", "Liberation Sans", sans-serif;'>N</span>
<span class="t" style='left:1308.08px;top:210.00px;font-size:12.5px;color:#1a1a1a;font-family:"DejaVu Sans", "Liberation Sans", sans-serif;'>O</span>
<span class="t" style='left:1388.73px;top:210.00px;font-size:12.5px;color:#1a1a1a;font-family:"DejaVu Sans", "Liberation Sans", sans-serif;'>P</span>
<span class="t" style='left:9.52px;top:231.00px;font-size:12.5px;color:#1a1a1a;font-family:"DejaVu Sans", "Liberation Sans", sans-serif;'>1</span>
<span class="t" style='left:9.52px;top:251.00px;font-size:12.5px;color:#1a1a1a;font-family:"DejaVu Sans", "Liberation Sans", sans-serif;'>2</span>
<span class="t" style='left:9.52px;top:271.00px;font-size:12.5px;color:#1a1a1a;font-family:"DejaVu Sans", "Liberation Sans", sans-serif;'>3</span>
<span class="t" style='left:9.52px;top:291.00px;font-size:12.5px;color:#1f6b41;font-family:"DejaVu Sans", "Liberation Sans", sans-serif;'>4</span>
<span class="t" style='left:9.52px;top:311.00px;font-size:12.5px;color:#1a1a1a;font-family:"DejaVu Sans", "Liberation Sans", sans-serif;'>5</span>
<span class="t" style='left:9.52px;top:331.00px;font-size:12.5px;color:#1a1a1a;font-family:"DejaVu Sans", "Liberation Sans", sans-serif;'>6</span>
<span class="t" style='left:9.52px;top:351.00px;font-size:12.5px;color:#1a1a1a;font-family:"DejaVu Sans", "Liberation Sans", sans-serif;'>7</span>
<span class="t" style='left:9.52px;top:371.00px;font-size:12.5px;color:#1a1a1a;font-family:"DejaVu Sans", "Liberation Sans", sans-serif;'>8</span>
<span class="t" style='left:9.52px;top:391.00px;font-size:12.5px;color:#1a1a1a;font-family:"DejaVu Sans", "Liberation Sans", sans-serif;'>9</span>
<span class="t" style='left:7.30px;top:411.00px;font-size:12.5px;color:#1a1a1a;font-family:"DejaVu Sans", "Liberation Sans", sans-serif;transform:scaleX(0.905);transform-origin:0 0;'>10</span>
<span class="t" style='left:7.30px;top:431.00px;font-size:12.5px;color:#1a1a1a;font-family:"DejaVu Sans", "Liberation Sans", sans-serif;transform:scaleX(0.905);transform-origin:0 0;'>11</span>
<span class="t" style='left:7.30px;top:451.00px;font-size:12.5px;color:#1a1a1a;font-family:"DejaVu Sans", "Liberation Sans", sans-serif;transform:scaleX(0.905);transform-origin:0 0;'>12</span>
<span class="t" style='left:7.30px;top:471.00px;font-size:12.5px;color:#1a1a1a;font-family:"DejaVu Sans", "Liberation Sans", sans-serif;transform:scaleX(0.905);transform-origin:0 0;'>13</span>
<span class="t" style='left:7.30px;top:491.00px;font-size:12.5px;color:#1a1a1a;font-family:"DejaVu Sans", "Liberation Sans", sans-serif;transform:scaleX(0.905);transform-origin:0 0;'>14</span>
<span class="t" style='left:7.30px;top:511.00px;font-size:12.5px;color:#1a1a1a;font-family:"DejaVu Sans", "Liberation Sans", sans-serif;transform:scaleX(0.905);transform-origin:0 0;'>15</span>
<span class="t" style='left:7.30px;top:531.00px;font-size:12.5px;color:#1a1a1a;font-family:"DejaVu Sans", "Liberation Sans", sans-serif;transform:scaleX(0.905);transform-origin:0 0;'>16</span>
<span class="t" style='left:7.30px;top:551.00px;font-size:12.5px;color:#1a1a1a;font-family:"DejaVu Sans", "Liberation Sans", sans-serif;transform:scaleX(0.905);transform-origin:0 0;'>17</span>
<span class="t" style='left:7.30px;top:571.00px;font-size:12.5px;color:#1a1a1a;font-family:"DejaVu Sans", "Liberation Sans", sans-serif;transform:scaleX(0.905);transform-origin:0 0;'>18</span>
<span class="t" style='left:7.30px;top:591.00px;font-size:12.5px;color:#1a1a1a;font-family:"DejaVu Sans", "Liberation Sans", sans-serif;transform:scaleX(0.905);transform-origin:0 0;'>19</span>
<span class="t" style='left:7.30px;top:611.00px;font-size:12.5px;color:#1a1a1a;font-family:"DejaVu Sans", "Liberation Sans", sans-serif;transform:scaleX(0.905);transform-origin:0 0;'>20</span>
<span class="t" style='left:7.30px;top:631.00px;font-size:12.5px;color:#1a1a1a;font-family:"DejaVu Sans", "Liberation Sans", sans-serif;transform:scaleX(0.905);transform-origin:0 0;'>21</span>
<span class="t" style='left:7.30px;top:651.00px;font-size:12.5px;color:#1a1a1a;font-family:"DejaVu Sans", "Liberation Sans", sans-serif;transform:scaleX(0.905);transform-origin:0 0;'>22</span>
<span class="t" style='left:7.30px;top:671.00px;font-size:12.5px;color:#1a1a1a;font-family:"DejaVu Sans", "Liberation Sans", sans-serif;transform:scaleX(0.905);transform-origin:0 0;'>23</span>
<span class="t" style='left:7.30px;top:691.00px;font-size:12.5px;color:#1a1a1a;font-family:"DejaVu Sans", "Liberation Sans", sans-serif;transform:scaleX(0.905);transform-origin:0 0;'>24</span>
<span class="t" style='left:29.50px;top:231.00px;font-size:12.5px;color:#fff;-webkit-text-stroke:0.55px currentColor;font-family:"DejaVu Sans", "Liberation Sans", sans-serif;letter-spacing:0.106px;'>Nom</span>
<span class="t" style='left:109.20px;top:231.00px;font-size:12.5px;color:#fff;-webkit-text-stroke:0.55px currentColor;font-family:"DejaVu Sans", "Liberation Sans", sans-serif;letter-spacing:0.175px;'>Prénom</span>
<span class="t" style='left:189.20px;top:231.00px;font-size:12.5px;color:#fff;-webkit-text-stroke:0.55px currentColor;font-family:"DejaVu Sans", "Liberation Sans", sans-serif;letter-spacing:0.703px;'>Mail</span>
<span class="t" style='left:29.70px;top:251.00px;font-size:12.5px;color:#000;-webkit-text-stroke:0.12px currentColor;font-family:"DejaVu Sans", "Liberation Sans", sans-serif;letter-spacing:-0.046px;'>Beaudelain</span>
<span class="t" style='left:108.70px;top:251.00px;font-size:12.5px;color:#000;-webkit-text-stroke:0.12px currentColor;font-family:"DejaVu Sans", "Liberation Sans", sans-serif;letter-spacing:-0.151px;'>Stéphane</span>
<span class="t" style='left:188.70px;top:251.00px;font-size:12.5px;color:#0563c1;-webkit-text-stroke:0.12px currentColor;font-family:"DejaVu Sans", "Liberation Sans", sans-serif;text-decoration:underline;text-underline-offset:2px;text-decoration-skip-ink:none;text-decoration-thickness:1px;letter-spacing:0.034px;'>stephane.beaudelain@cneap.fr</span>
<span class="t" style='width:76.8px;overflow:hidden;left:29.50px;top:271.00px;font-size:12.5px;color:#000;-webkit-text-stroke:0.12px currentColor;font-family:"DejaVu Sans", "Liberation Sans", sans-serif;letter-spacing:0.078px;'>Informatique</span>
<span class="t" style='left:108.70px;top:271.00px;font-size:12.5px;color:#000;-webkit-text-stroke:0.12px currentColor;font-family:"DejaVu Sans", "Liberation Sans", sans-serif;letter-spacing:-0.005px;'>Corbie</span>
<span class="t" style='left:188.70px;top:271.00px;font-size:12.5px;color:#0563c1;-webkit-text-stroke:0.12px currentColor;font-family:"DejaVu Sans", "Liberation Sans", sans-serif;text-decoration:underline;text-underline-offset:2px;text-decoration-skip-ink:none;text-decoration-thickness:1px;letter-spacing:0.098px;'>informatique.corbie@cneap.fr</span>
<span class="t" style='left:112.70px;top:714.00px;font-size:13px;color:#217346;font-weight:700;letter-spacing:-0.196px;'>Feuil1</span>
<span class="t" style='left:9.20px;top:741.00px;font-size:11px;color:#444;letter-spacing:-0.029px;'>Prêt</span>
<span class="t" style='left:1390.70px;top:741.00px;font-size:11px;color:#444;transform:scaleX(0.949);transform-origin:0 0;'>100 %</span>
<span class="t" style='left:276.00px;top:77.00px;font-size:17.5px;color:#3b3a39;transform:scaleX(0.984);transform-origin:0 0;'>A</span>
<span class="t" style='left:299.50px;top:80.00px;font-size:14px;color:#3b3a39;transform:scaleX(0.995);transform-origin:0 0;'>A</span>
<span class="t" style='left:285.30px;top:109.00px;font-size:15px;color:#3b3a39;transform:scaleX(0.998);transform-origin:0 0;'>A</span>
<span class="t" style='left:548.50px;top:109.30px;font-size:19.5px;color:#3b3a39;transform:scaleX(0.865);transform-origin:0 0;'>%</span>
<span class="t" style='left:569.70px;top:114.00px;font-size:10.2px;color:#605e5c;transform:scaleX(0.959);transform-origin:0 0;'>000</span>
<span class="t" style='left:609.30px;top:109.80px;font-size:10.2px;color:#3b3a39;transform:scaleX(0.859);transform-origin:0 0;'>,0</span>
<span class="t" style='left:604.10px;top:118.10px;font-size:10.2px;color:#3b3a39;transform:scaleX(0.882);transform-origin:0 0;'>,00</span>
<span class="t" style='left:626.10px;top:109.80px;font-size:10.2px;color:#3b3a39;transform:scaleX(0.882);transform-origin:0 0;'>,00</span>
<span class="t" style='left:631.30px;top:118.10px;font-size:10.2px;color:#3b3a39;transform:scaleX(0.859);transform-origin:0 0;'>,0</span>
<span class="t" style='left:459.10px;top:77.40px;font-size:11px;color:#3b3a39;letter-spacing:0.350px;'>ab</span>
<span class="t" style='left:459.20px;top:84.80px;font-size:11px;color:#3b3a39;'>c</span>
<span class="t" style='left:1085.00px;top:70.80px;font-size:16px;color:#2b88d8;transform:scaleX(0.965);transform-origin:0 0;'>A</span>
<span class="t" style='left:1085.00px;top:84.70px;font-size:16px;color:#3b3a39;transform:scaleX(0.971);transform-origin:0 0;'>Z</span>
<svg style="left:396px;top:74px" width="30" height="24" viewBox="396 74 30 24"><text transform="translate(406.5,92.3) rotate(-45)" font-family="Liberation Sans, sans-serif" font-size="11.5" fill="#3b3a39">ab</text></svg>
</div>

<div class="frame"></div>
</div>
</body>
</html>
